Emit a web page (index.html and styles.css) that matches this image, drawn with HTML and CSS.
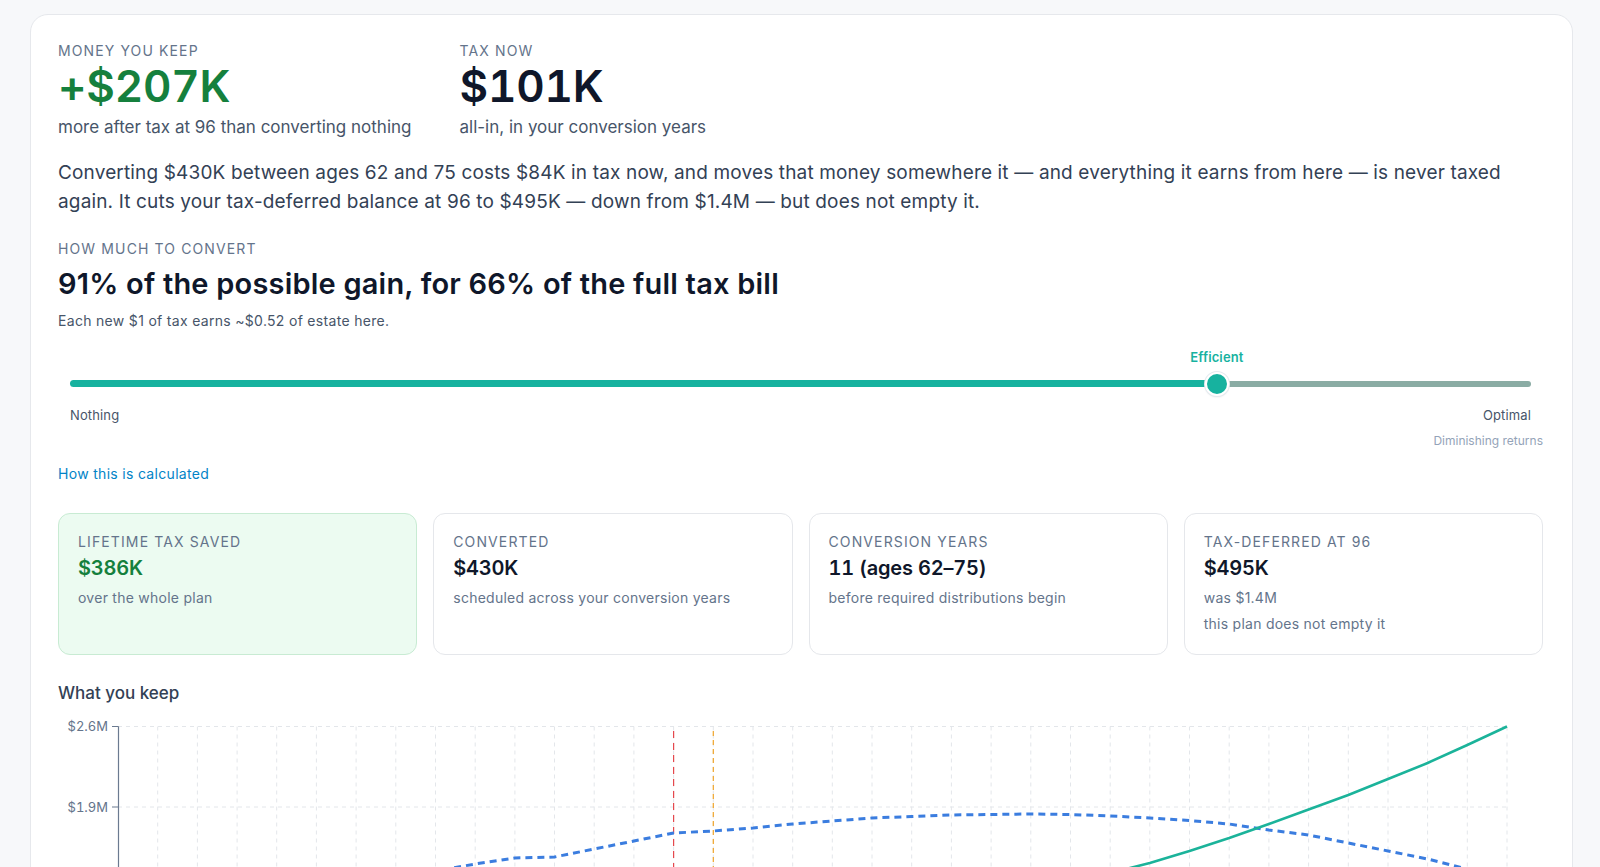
FILE: index.html
```html
<!DOCTYPE html>
<html lang="en-US">
  <head>
    <meta charset="utf-8" />
    <meta name="viewport" content="width=device-width" />
    <title>Roth conversion plan</title>
    <link rel="stylesheet" href="styles.css">
  </head>

  <body>
    <main class="page">
      <section class="card">
        <div class="headline-stats">
          <div class="stat">
            <div class="eyebrow">Money you keep</div>
            <div class="stat-value positive">+$207K</div>
            <div class="stat-note">more after tax at 96 than converting nothing</div>
          </div>
          <div class="stat">
            <div class="eyebrow">Tax now</div>
            <div class="stat-value">$101K</div>
            <div class="stat-note">all-in, in your conversion years</div>
          </div>
        </div>

        <p class="summary">
          Converting $430K between ages 62 and 75 costs $84K in tax now, and moves that money somewhere it — and everything it earns from here — is never taxed again. It cuts your tax-deferred balance at 96 to $495K — down from $1.4M — but does not empty it.
        </p>

        <div class="eyebrow section-label">How much to convert</div>
        <h2 class="verdict">91% of the possible gain, for 66% of the full tax bill</h2>
        <p class="rate">Each new $1 of tax earns ~$0.52 of estate here.</p>

        <div class="slider">
          <div class="slider-marker-row">
            <span class="slider-marker" style="left: 78.5%">Efficient</span>
          </div>
          <div class="slider-track">
            <div class="slider-fill" style="width: 78.5%"></div>
            <div class="slider-rest"></div>
            <span class="slider-thumb" style="left: 78.5%"></span>
          </div>
          <div class="slider-ends">
            <span>Nothing</span>
            <span>Optimal</span>
          </div>
        </div>
        <div class="slider-note">Diminishing returns</div>

        <p class="method"><a href="#">How this is calculated</a></p>

        <div class="metrics">
          <div class="metric metric-saved">
            <div class="eyebrow">Lifetime tax saved</div>
            <div class="metric-value positive">$386K</div>
            <div class="metric-note">over the whole plan</div>
          </div>
          <div class="metric">
            <div class="eyebrow">Converted</div>
            <div class="metric-value">$430K</div>
            <div class="metric-note">scheduled across your conversion years</div>
          </div>
          <div class="metric">
            <div class="eyebrow">Conversion years</div>
            <div class="metric-value">11 (ages 62–75)</div>
            <div class="metric-note">before required distributions begin</div>
          </div>
          <div class="metric">
            <div class="eyebrow">Tax-deferred at 96</div>
            <div class="metric-value">$495K</div>
            <div class="metric-note">was $1.4M</div>
            <div class="metric-note">this plan does not empty it</div>
          </div>
        </div>

        <h3 class="chart-title">What you keep</h3>
        <svg class="chart" viewBox="0 0 1485 330" preserveAspectRatio="none">
          <!-- grid -->
          <path class="grid" d="M60 13.5H1449M60 94H1449M60 174.5H1449M60 255H1449" />
          <path class="grid" d="M99.7 13.5V295M139.4 13.5V295M179.1 13.5V295M218.7 13.5V295M258.4 13.5V295M298.1 13.5V295M337.8 13.5V295M377.5 13.5V295M417.2 13.5V295M456.9 13.5V295M496.5 13.5V295M536.2 13.5V295M575.9 13.5V295M615.6 13.5V295M655.3 13.5V295M695 13.5V295M734.7 13.5V295M774.3 13.5V295M814 13.5V295M853.7 13.5V295M893.4 13.5V295M933.1 13.5V295M972.8 13.5V295M1012.5 13.5V295M1052.2 13.5V295M1091.8 13.5V295M1131.5 13.5V295M1171.2 13.5V295M1210.9 13.5V295M1250.6 13.5V295M1290.3 13.5V295M1330 13.5V295M1369.6 13.5V295M1409.3 13.5V295M1449 13.5V295" />

          <!-- axis -->
          <path class="axis" d="M60.5 13.5V295M54 13.5H60.5M54 94H60.5M54 174.5H60.5M54 255H60.5" />
          <text class="tick" x="50" y="18">$2.6M</text>
          <text class="tick" x="50" y="98.5">$1.9M</text>
          <text class="tick" x="50" y="179">$1.2M</text>
          <text class="tick" x="50" y="259.5">$0.5M</text>

          <!-- conversion end / RMD start -->
          <path class="mark-end" d="M615.6 18V295" />
          <path class="mark-rmd" d="M655.3 18V295" />

          <!-- no conversion -->
          <path class="line-base" d="M258.4 196L298.1 182L337.8 170L377.5 158L417.2 151L456.9 145L496.5 144L536.2 136L575.9 128L615.6 120L655.3 118L695 115L734.7 111L774.3 108L814 105L853.7 103.5L893.4 102L933.1 101.5L972.8 101L1012.5 101.5L1052.2 103L1091.8 105L1131.5 107.5L1171.2 111L1210.9 117L1250.6 122L1290.3 130L1330 138L1369.6 146L1409.3 156L1449 166" />
          <!-- with plan -->
          <path class="line-plan" d="M972.8 182L1012.5 171L1052.2 160L1091.8 150L1131.5 138L1171.2 125L1210.9 111L1250.6 96.5L1290.3 82L1330 66L1369.6 50L1409.3 32L1449 13.5" />
        </svg>
      </section>
    </main>
  </body>
</html>
```

FILE: styles.css
```css
body {
  margin: 0;
  background-color: #f7f8fa;
  font-family: Inter, "Noto Sans", sans-serif;
  color: #0f172a;
}

.page {
  padding: 14px 27px 40px 30px;
}

.card {
  background-color: #fff;
  border: 1px solid #e6e8ec;
  border-radius: 18px;
  padding: 26px 29px 28px 27px;
}

/* top numbers */
.headline-stats {
  display: flex;
  gap: 48px;
}

.eyebrow {
  font-size: 14px;
  line-height: 20px;
  letter-spacing: 0.08em;
  text-transform: uppercase;
  color: #64748b;
}

.stat-value {
  font-size: 44px;
  line-height: 50px;
  font-weight: 600;
  letter-spacing: -0.005em;
  font-variant-numeric: tabular-nums;
}

.positive {
  color: #15803d;
}

.stat-note {
  margin-top: 4px;
  font-size: 17px;
  line-height: 24px;
  color: #475569;
}

.summary {
  margin: 20px 0 0;
  font-size: 19px;
  line-height: 28.5px;
  letter-spacing: 0.008em;
  color: #334155;
}

.section-label {
  margin-top: 23px;
}

.verdict {
  margin: 7px 0 0;
  font-size: 29px;
  line-height: 36px;
  font-weight: 600;
  letter-spacing: 0.007em;
}

.rate {
  margin: 9px 0 0;
  font-size: 14px;
  line-height: 20px;
  letter-spacing: 0.022em;
  color: #475569;
}

/* slider */
.slider {
  margin-top: 17px;
  padding: 0 12px;
}

.slider-marker-row {
  position: relative;
  height: 18px;
}

.slider-marker {
  position: absolute;
  top: 0;
  transform: translateX(-50%);
  font-size: 13px;
  line-height: 18px;
  font-weight: 600;
  letter-spacing: 0.01em;
  color: #17b29f;
}

.slider-track {
  position: relative;
  display: flex;
  align-items: center;
  height: 7px;
  margin-top: 14px;
}

.slider-fill {
  height: 7px;
  background-color: #17b29f;
  border-radius: 4px 0 0 4px;
}

.slider-rest {
  flex: 1;
  height: 6px;
  background-color: #8aaca4;
  border-radius: 0 3px 3px 0;
}

.slider-thumb {
  position: absolute;
  top: 50%;
  width: 20px;
  height: 20px;
  border-radius: 50%;
  background-color: #17b29f;
  border: 2px solid #fff;
  box-shadow: 0 0 0 1px #e5eaef, 0 1px 2px rgba(15, 23, 42, 0.12);
  transform: translate(-50%, -50%);
}

.slider-ends {
  display: flex;
  justify-content: space-between;
  margin-top: 18.5px;
  font-size: 13px;
  line-height: 18px;
  letter-spacing: 0.01em;
  color: #475569;
}

.slider-note {
  margin-top: 9px;
  text-align: right;
  font-size: 12px;
  line-height: 16px;
  color: #94a3b8;
}

.method {
  margin: 15.5px 0 0;
  font-size: 14px;
  line-height: 20px;
  letter-spacing: 0.022em;
}

.method a {
  color: #0284c7;
  text-decoration: none;
}

/* metric cards */
.metrics {
  display: grid;
  grid-template-columns: repeat(4, 1fr);
  gap: 16px;
  margin-top: 28.5px;
}

.metric {
  border: 1px solid #e5e7eb;
  border-radius: 12px;
  padding: 18px 19px 20px;
}

.metric-saved {
  background-color: #ecfbf1;
  border-color: #c8ebd3;
}

.metric-value {
  margin-top: 2px;
  font-size: 20px;
  line-height: 28px;
  font-weight: 600;
  letter-spacing: -0.01em;
  font-variant-numeric: tabular-nums;
}

.metric-note {
  margin-top: 6px;
  font-size: 14px;
  line-height: 20px;
  letter-spacing: 0.018em;
  color: #64748b;
}

/* chart */
.chart-title {
  margin: 26px 0 0;
  font-size: 17px;
  line-height: 24px;
  font-weight: 500;
  color: #334155;
}

.chart {
  display: block;
  margin-top: 8px;
  width: 100%;
  height: 330px;
  overflow: visible;
  font-variant-numeric: tabular-nums;
}

.chart .grid {
  fill: none;
  stroke: #e3e6ea;
  stroke-width: 1;
  stroke-dasharray: 4 4;
}

.chart .axis {
  fill: none;
  stroke: #6b7a90;
  stroke-width: 1.2;
}

.chart .tick {
  font-size: 13px;
  fill: #64748b;
  text-anchor: end;
}

.chart .mark-end {
  fill: none;
  stroke: #e5484d;
  stroke-width: 1.2;
  stroke-dasharray: 7 5;
}

.chart .mark-rmd {
  fill: none;
  stroke: #f0a52a;
  stroke-width: 1.2;
  stroke-dasharray: 5 4;
}

.chart .line-base {
  fill: none;
  stroke: #3b7ddf;
  stroke-width: 3;
  stroke-dasharray: 7 5;
  stroke-linejoin: round;
}

.chart .line-plan {
  fill: none;
  stroke: #1bb39a;
  stroke-width: 2.5;
  stroke-linejoin: round;
}
```
